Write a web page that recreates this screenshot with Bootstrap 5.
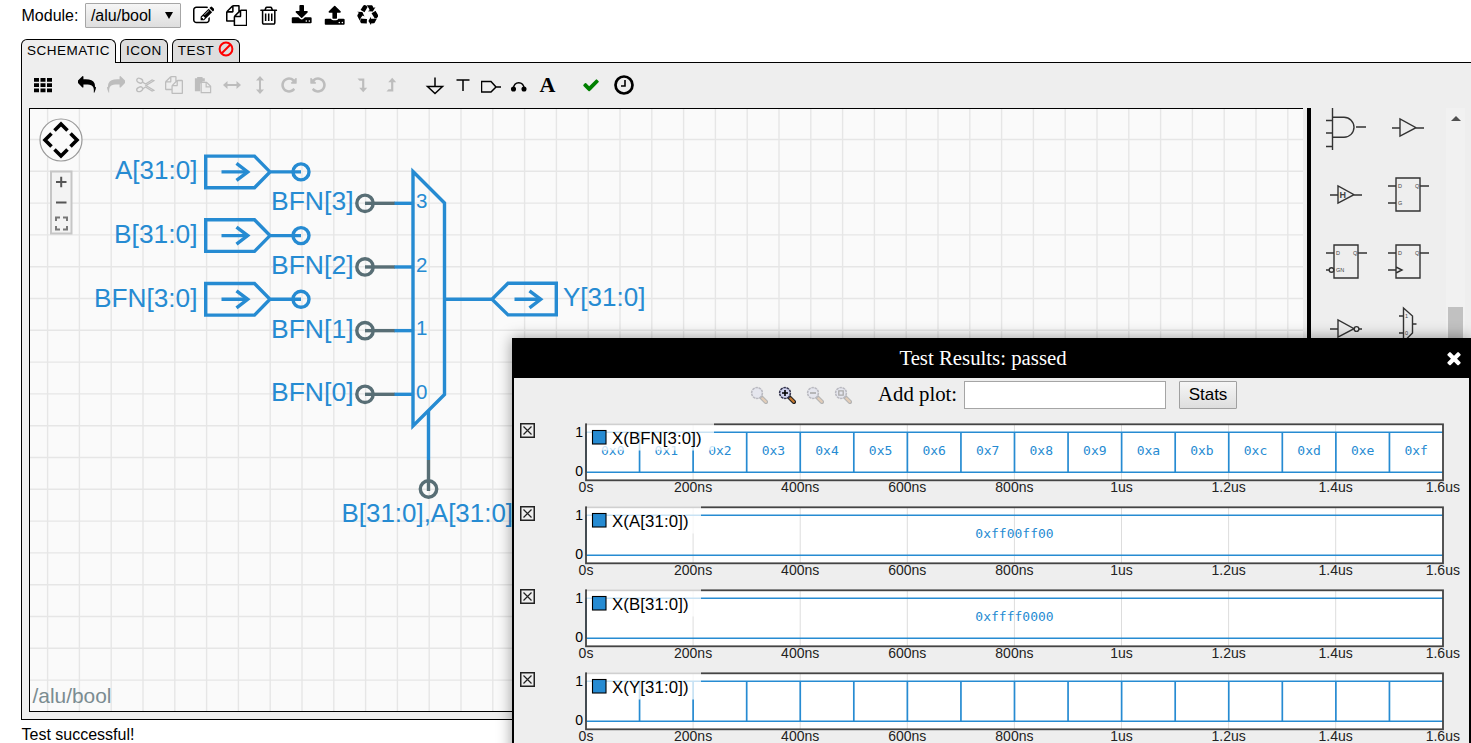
<!DOCTYPE html>
<html lang="en">
<head>
<meta charset="utf-8">
<title>/alu/bool</title>
<link href="https://cdn.jsdelivr.net/npm/bootstrap@5.3.0/dist/css/bootstrap.min.css" rel="stylesheet">
<style>
body{font-family:"Liberation Sans",Arial,sans-serif;font-size:16px;line-height:18px;color:#000;background:#fff;height:743px}
svg{fill:currentColor}
.app{height:743px}
.module-bar{height:31px;padding-left:21.500px}
.module-bar svg{width:21.4px;height:21.4px}
.module-icons{gap:11.4px;margin-left:12px}
.picker{width:96px;height:25px;margin-left:6.500px;border:1px solid #a6a6a6;border-radius:1px;background:linear-gradient(#f6f6f6,#dedede);padding:0 7px 0 5px}
.picker i{border:4px solid transparent;border-top:7px solid #000;border-bottom:0;width:0;height:0}
.tabs{height:31px;padding-left:21px;gap:4px;z-index:1}
.tab-item{height:23px;border:1px solid #000;border-bottom:0;border-radius:6px 6px 0 0;background:#ddd;font-size:13.5px;letter-spacing:.5px;padding:0 5px;line-height:21px}
.tab-item.current{height:24px;background:#eee;margin-bottom:-1px;width:95px}
.frame{margin-left:21px;height:658px;border:1px solid #000;border-right:0;background:#eee}
.tools{height:45px;padding-left:7px}
.tool{width:28.9px;height:43px}
.tool.t28{width:28.1px}
.tool svg{width:20px;height:20px}
.off{color:#bdbdbd}
.work{height:604px;padding-left:7px}
.sheet{width:1274px;height:604px;border:1px solid #000;border-right:0;background:#fafafa}
.divider{width:4px;background:#000;margin-left:4px}
.parts{width:135px;overflow:hidden;padding-left:3px}
.parts-grid{display:grid;grid-template-columns:62px 62px;grid-auto-rows:67px;margin-top:-14px}
.parts-grid svg{width:62px;height:67px;fill:none;stroke:#333;stroke-width:1.4;overflow:visible}
.parts-grid text{font:5.5px "Liberation Sans",sans-serif;fill:#444;stroke:none}
.sbar{width:19px;background:#f1f1f1}
.sbar .up{border:5px solid transparent;border-bottom:5px solid #505050;border-top:0;width:0;height:0;margin-top:8px}
.sbar .thumb{width:15px;height:60px;background:#c1c1c1;margin-top:186px}
.status{padding:6px 0 0 21.500px}
.results{left:512px;top:338px;width:959px;height:440px;border:2px solid #000;border-top:0;background:#eee;box-shadow:0 0 14px rgba(0,0,0,.4)}
.results-head{height:40px;background:#000;color:#fff;font:20.8px "Liberation Serif",serif}
.results-head svg{width:20px;height:20px;margin-right:5px}
.plot-tools{height:34px;padding-left:236px;font:20.8px "Liberation Serif",serif}
.add-label{width:79px;margin:-3px 0 0 26px;white-space:nowrap}
.mags{gap:10px}
.mags svg{width:18px;height:18px}
.faded{opacity:.28}
.plot-input{width:202px;height:28px;border:1px solid #a5a5a5;background:#fff;margin-left:7px}
.stats-btn{width:58px;height:28px;margin-left:13px;border:1px solid #a0a0a0;border-radius:1px;background:linear-gradient(#f6f6f6,#dedede);font:17px "Liberation Sans",sans-serif;padding:0;color:#000}
.plots{padding-top:6px}
.plot-row{height:83.1px}
.plot-row .x-btn{width:15px;height:15px;margin:5px 0 0 6px;flex:none;fill:none}
.wave{width:934px;height:83px;overflow:visible;flex:none}
.wave text,.schem text{font-family:"Liberation Sans",Arial,sans-serif}
.wave text.hex{font-family:"DejaVu Sans Mono",monospace;font-size:13px;fill:#268bd2}
</style>
</head>
<body class="overflow-hidden">
<svg width="0" height="0" class="position-absolute">
<symbol id="edit" viewBox="0 0 1792 1792"><path d="M888 1184l116-116-152-152-116 116v56h96v96h56zm440-720q-16-16-33 1l-350 350q-17 17-1 33t33-1l350-350q17-17 1-33zm80 594v190q0 119-84.500 203.500t-203.500 84.500h-832q-119 0-203.500-84.500t-84.500-203.500v-832q0-119 84.500-203.500t203.500-84.500h832q63 0 117 25 15 7 18 23 3 17-9 29l-49 49q-14 14-32 8-23-6-45-6h-832q-66 0-113 47t-47 113v832q0 66 47 113t113 47h832q66 0 113-47t47-113v-126q0-13 9-22l64-64q15-15 35-7t20 29zm-96-738l288 288-672 672h-288v-288zm444 132l-92 92-288-288 92-92q28-28 68-28t68 28l152 152q28 28 28 68t-28 68z"/></symbol>
<symbol id="files" viewBox="0 0 1792 1792"><path d="M1696 384q40 0 68 28t28 68v1216q0 40-28 68t-68 28h-960q-40 0-68-28t-28-68v-288h-544q-40 0-68-28t-28-68v-672q0-40 20-88t48-76l408-408q28-28 76-48t88-20h416q40 0 68 28t28 68v328q68-40 128-40h416zm-544 213l-299 299h299v-299zm-640-384l-299 299h299v-299zm196 647l316-316v-416h-384v416q0 40-28 68t-68 28h-416v640h512v-256q0-40 20-88t48-76zm956 804v-1152h-384v416q0 40-28 68t-68 28h-416v640h896z"/></symbol>
<symbol id="trash" viewBox="0 0 1792 1792"><path d="M704 736v576q0 14-9 23t-23 9h-64q-14 0-23-9t-9-23v-576q0-14 9-23t23-9h64q14 0 23 9t9 23zm256 0v576q0 14-9 23t-23 9h-64q-14 0-23-9t-9-23v-576q0-14 9-23t23-9h64q14 0 23 9t9 23zm256 0v576q0 14-9 23t-23 9h-64q-14 0-23-9t-9-23v-576q0-14 9-23t23-9h64q14 0 23 9t9 23zm128 724v-948h-896v948q0 22 7 40.500t14.500 27 10.500 8.500h832q3 0 10.500-8.500t14.500-27 7-40.500zm-672-1076h448l-48-117q-7-9-17-11h-317q-10 2-17 11zm928 32v64q0 14-9 23t-23 9h-96v948q0 83-47 143.500t-113 60.500h-832q-66 0-113-58.500t-47-141.500v-952h-96q-14 0-23-9t-9-23v-64q0-14 9-23t23-9h309l70-167q15-37 54-63t79-26h320q40 0 79 26t54 63l70 167h309q14 0 23 9t9 23z"/></symbol>
<symbol id="download" viewBox="0 0 1792 1792"><path d="M1344 1344q0-26-19-45t-45-19-45 19-19 45 19 45 45 19 45-19 19-45zm256 0q0-26-19-45t-45-19-45 19-19 45 19 45 45 19 45-19 19-45zm128-224v320q0 40-28 68t-68 28h-1472q-40 0-68-28t-28-68v-320q0-40 28-68t68-28h465l135 136q58 56 136 56t136-56l136-136h464q40 0 68 28t28 68zm-325-569q17 41-14 70l-448 448q-18 19-45 19t-45-19l-448-448q-31-29-14-70 17-39 59-39h256v-448q0-26 19-45t45-19h256q26 0 45 19t19 45v448h256q42 0 59 39z"/></symbol>
<symbol id="upload" viewBox="0 0 1792 1792"><path d="M1344 1472q0-26-19-45t-45-19-45 19-19 45 19 45 45 19 45-19 19-45zm256 0q0-26-19-45t-45-19-45 19-19 45 19 45 45 19 45-19 19-45zm128-224v320q0 40-28 68t-68 28h-1472q-40 0-68-28t-28-68v-320q0-40 28-68t68-28h427q21 56 70.500 92t110.500 36h256q61 0 110.500-36t70.500-92h427q40 0 68 28t28 68zm-325-648q-17 40-59 40h-256v448q0 26-19 45t-45 19h-256q-26 0-45-19t-19-45v-448h-256q-42 0-59-40-17-39 14-69l448-448q18-19 45-19t45 19l448 448q31 30 14 69z"/></symbol>
<symbol id="recycle" viewBox="0 0 1792 1792"><path d="M836 1169l-15 368-2 22-420-29q-36-3-67-31.500t-47-65.500q-11-27-14.500-55t4-65 12-55 21.500-64 19-53q78 12 509 28zm-387-586l180 379-147-92q-63 72-111.500 144.500t-72.500 125-39.500 94.500-18.500 63l-4 21-190-357q-17-26-18-56t6-47l8-18q35-63 114-188l-140-86zm1231 517l-188 359q-12 29-36.500 46.500t-43.500 20.500l-18 4q-71 7-219 12l8 164-230-367 211-362 7 173q170 16 283 5t170-33zm-785-924q-47 63-265 435l-317-187-19-12 225-356q20-31 60-45t80-10q24 2 48.500 12t42 21 41.500 33 36 34.500 36 39.500 32 35zm655 307l212 363q18 37 12.500 76t-27.500 74q-13 20-33 37t-38 28-48.500 22-47 16-51.500 14-46 12q-34-72-265-436l313-195zm-143-226l142-83-220 373-419-20 151-86q-34-89-75-166t-75.500-123.500-64.500-80-47-46.500l-17-13 405 1q31-3 58 10.500t39 28.500l11 15q39 61 112 190z"/></symbol>
<symbol id="ban" viewBox="0 0 16 16"><g fill="none" stroke="currentColor" stroke-width="2"><circle cx="8" cy="8" r="6.400"/><path d="M3.500 12.500l9-9"/></g></symbol>
<symbol id="th" viewBox="0 0 20 20"><path d="M1 3h5v3.800H1zM7.500 3h5v3.800h-5zM14 3h5v3.800h-5zM1 8.200h5V12H1zM7.500 8.200h5V12h-5zM14 8.200h5V12h-5zM1 13.400h5v3.800H1zM7.500 13.400h5v3.800h-5zM14 13.400h5v3.800h-5z"/></symbol>
<symbol id="reply" viewBox="0 0 1792 1792"><path d="M1792 1120q0 166-127 451-3 7-10.500 24t-13.500 30-13 22q-12 17-28 17-15 0-23.500-10t-8.500-25q0-9 2.500-26.500t2.500-23.500q5-68 5-123 0-112-19.500-200.500t-54-153.500-90-111.500-120-76-151-46.500-176-25.500-202.500-6.500h-224v256q0 26-19 45t-45 19-45-19l-512-512q-19-19-19-45t19-45l512-512q19-19 45-19t45 19 19 45v256h224q713 0 875 403 53 134 53 333z"/></symbol>
<symbol id="cut" viewBox="0 0 20 20"><g fill="none" stroke="currentColor" stroke-width="1.300"><ellipse cx="4.700" cy="5.700" rx="3.100" ry="2.200" transform="rotate(25 4.700 5.700)"/><ellipse cx="4.700" cy="14.300" rx="3.100" ry="2.200" transform="rotate(-25 4.700 14.300)"/><path d="M7.500 7l3 2 6.600-4 1.900.7-8 4.800 8 4.800-1.900.7-6.600-4-3 2"/></g></symbol>
<symbol id="paste" viewBox="0 0 20 20"><path d="M1 2.500h2.500V1h6v1.500H12V6H9.500L7 8.500V17H1z"/><path d="M8 7h6l4.500 4.500V18.500H8z" fill="#eee" stroke="currentColor" stroke-width="1.300"/><path d="M13.500 7v5h5" fill="none" stroke="currentColor" stroke-width="1.300"/></symbol>
<symbol id="harrow" viewBox="0 0 20 20"><path d="M1 10L5.500 6v3h9V6l4.500 4-4.500 4v-3h-9v3z"/></symbol>
<symbol id="repeat" viewBox="0 0 1792 1792"><path d="M1664 256v448q0 26-19 45t-45 19h-448q-42 0-59-40-17-39 14-69l138-138q-148-137-349-137-104 0-198.500 40.500t-163.500 109.500-109.500 163.500-40.500 198.500 40.500 198.500 109.500 163.500 163.500 109.500 198.500 40.500q119 0 225-52t179-147q7-10 23-12 15 0 25 9l137 138q9 8 9.500 20.500t-7.500 22.500q-109 132-264 204.500t-327 72.500q-156 0-298-61t-245-164-164-245-61-298 61-298 164-245 245-164 298-61q147 0 284.500 55.500t244.500 156.500l130-129q29-31 70-14 39 17 39 59z"/></symbol>
<symbol id="down" viewBox="0 0 20 20"><path d="M4.500 3.500h6.800v9.200h2.900l-4 4.500-4-4.500h2.900v-7H6.500z"/></symbol>
<symbol id="check" viewBox="0 0 1792 1792"><path d="M1671 566q0 40-28 68l-724 724-136 136q-28 28-68 28t-68-28l-136-136-362-362q-28-28-28-68t28-68l136-136q28-28 68-28t68 28l294 295 656-657q28-28 68-28t68 28l136 136q28 28 28 68z"/></symbol>
<symbol id="times" viewBox="0 0 1792 1792"><path d="M1490 1322q0 40-28 68l-136 136q-28 28-68 28t-68-28l-294-294-294 294q-28 28-68 28t-68-28l-136-136q-28-28-28-68t28-68l294-294-294-294q-28-28-28-68t28-68l136-136q28-28 68-28t68 28l294 294 294-294q28-28 68-28t68 28l136 136q28 28 28 68t-28 68l-294 294 294 294q28 28 28 68z"/></symbol>
<symbol id="mag" viewBox="0 0 18 18"><path d="M11 11l5 5" stroke="#222" stroke-width="4.200" stroke-linecap="round"/><path d="M12.300 12.300l3.500 3.500" stroke="#c87a30" stroke-width="2.200" stroke-linecap="round"/><circle cx="7" cy="7" r="5.400" fill="#cfd2ee" stroke="#33334d" stroke-width="1.500" stroke-dasharray="2.600 .7"/></symbol>
<symbol id="pin" viewBox="0 0 110 40" overflow="visible"><g fill="none" stroke="#268bd2" stroke-width="3.400"><path d="M5.700 4.200h48.800L70 20 54.500 35.800H5.700zM70 20h31M21.500 20h26"/><path d="M36.500 11.500L47.700 20l-11.200 8.500"/><circle cx="101" cy="20" r="8"/></g></symbol>
</svg>

<div class="app d-flex flex-column position-relative overflow-hidden">
<header class="module-bar d-flex align-items-center flex-shrink-0">
<span>Module:</span>
<div class="picker d-flex align-items-center justify-content-between"><span>/alu/bool</span><i></i></div>
<div class="module-icons d-flex">
<svg><use href="#edit"/></svg><svg><use href="#files"/></svg><svg><use href="#trash"/></svg><svg><use href="#download"/></svg><svg><use href="#upload"/></svg><svg><use href="#recycle"/></svg>
</div>
</header>
<nav class="tabs d-flex align-items-end position-relative flex-shrink-0">
<div class="tab-item current">SCHEMATIC</div><div class="tab-item">ICON</div>
<div class="tab-item d-flex">TEST<svg width="16" height="16" style="color:#f00;margin:1px 0 0 4px"><use href="#ban"/></svg></div>
</nav>
<main class="frame flex-shrink-0">
<div class="tools d-flex align-items-start" id="tools"></div>
<div class="work d-flex">
<div class="sheet"><svg class="schem d-block" id="schem" width="1273" height="602" viewBox="30 109 1273 602"></svg></div>
<div class="divider"></div>
<div class="parts"><div class="parts-grid">
<svg viewBox="1314 94 62 67"><path d="M1332.500 94v56M1326 120.500h6.500M1326 133h6.500M1326 146.500h6.500M1332.500 117.300h11.500a9.800 9.800 0 0 1 0 20h-11.500M1356 127h10"/></svg>
<svg viewBox="1376 94 62 67"><path d="M1392 128h8M1416 128h8M1400 119v17l16-8.300z"/></svg>
<svg viewBox="1314 161 62 67"><path d="M1330 195h8M1354 195h8M1338 186v17l16-8.300z"/><text x="1339.500" y="198" style="font-weight:bold;font-size:9px">H</text></svg>
<svg viewBox="1376 161 62 67"><path d="M1396 178h24v33h-24zM1388 186h8M1388 203h8M1420 186h9"/><text x="1398" y="188">D</text><text x="1415" y="188">Q</text><text x="1398" y="205">G</text></svg>
<svg viewBox="1314 228 62 67"><path d="M1334 245h24v33h-24zM1326 253h8M1326 270h4M1358 253h9"/><circle cx="1331.500" cy="270" r="2.300"/><text x="1336" y="255">D</text><text x="1353" y="255">Q</text><text x="1336" y="272">GN</text></svg>
<svg viewBox="1376 228 62 67"><path d="M1396 245h24v33h-24zM1388 253h8M1388 270h8M1420 253h9M1396 267l6 3-6 3"/><text x="1398" y="255">D</text><text x="1415" y="255">Q</text></svg>
<svg viewBox="1314 295 62 67"><path d="M1330 329h8M1359 329h3M1338 320v17l16-8.300z"/><circle cx="1356.500" cy="329" r="2.400"/></svg>
<svg viewBox="1376 295 62 67"><path d="M1403.500 308v34l9-9v-17zM1399 316h4.500M1399 333h4.500M1412.500 324h4"/><text x="1405" y="318">1</text><text x="1405" y="335">0</text></svg>
</div></div>
<div class="sbar d-flex flex-column align-items-center"><div class="up"></div><div class="thumb"></div></div>
</div>
</main>
<footer class="status flex-shrink-0">Test successful!</footer>

<section class="results position-absolute">
<div class="results-head d-flex align-items-center"><span class="flex-grow-1 text-center ps-2">Test Results: passed</span><svg><use href="#times"/></svg></div>
<div class="plot-tools d-flex align-items-center">
<div class="mags d-flex">
<svg class="faded"><use href="#mag"/></svg>
<svg><use href="#mag"/><path d="M4 7h6M7 4v6" stroke="#000" stroke-width="1.600"/></svg>
<svg class="faded"><use href="#mag"/><path d="M4 7h6" stroke="#000" stroke-width="1.600"/></svg>
<svg class="faded"><use href="#mag"/><path d="M4.800 4.800h4.400v4.400H4.800z" fill="none" stroke="#000" stroke-width="1.300"/></svg>
</div>
<span class="add-label">Add plot:</span><div class="plot-input"></div><button class="stats-btn">Stats</button>
</div>
<div class="plots" id="plots"></div>
</section>
</div>

<script>
// toolbar: [drawing, extra classes]
const use = (id, t = '') => `<svg><use href="#${id}" ${t}/></svg>`;
const flip = 'transform="matrix(-1 0 0 1 20 0)"';
const line = d => `<svg fill="none" style="fill:none" stroke="#000" stroke-width="1.5">${d}</svg>`;
const gap = w => `<div style="width:${w}px"></div>`;
const tool = (s, c = '') => `<div class="tool d-flex align-items-center justify-content-center ${c}">${s}</div>`;
const small = s => s.replace('<svg>', '<svg style="width:18px;height:18px" viewBox="0 0 20 20">');
document.getElementById('tools').innerHTML =
 tool(use('th')) + gap(14.8) + tool(small(use('reply'))) +
 [small(use('reply', flip)), use('cut'), small(use('files')), small(use('paste')), use('harrow'), use('harrow', 'transform="rotate(90 10 10)"'), small(use('repeat')), small(use('repeat', flip))].map(s => tool(s, 'off')).join('') +
 gap(15.5) + tool(use('down'), 'off') + tool(use('down', 'transform="matrix(1 0 0 -1 0 20)"'), 'off') + gap(15) +
 [line('<path d="M10 2.500v9M2.500 11.500h15L10 18.500z"/>'),
  line('<path d="M3.500 5h13M10 5v11"/>'),
  line('<path d="M0.500 6.500h9.500l5 5.500-5 5H.5zM15 12h5"/>'),
  line('<path d="M4.500 14C4 5.500 15.500 5.500 15 14"/><circle cx="4.500" cy="14" r="1.800" fill="#000"/><circle cx="15" cy="14" r="1.800" fill="#000"/>'),
  '<span style="font:bold 22px Liberation Serif,serif">A</span>'].map(s => tool(s, 't28')).join('') +
 gap(15.600) + tool(`<span style="color:#008000" class="d-flex">${small(use('check'))}</span>`, 't28') + gap(4.500) +
 tool(`<svg style="fill:none" stroke="#000"><circle cx="10" cy="10" r="8.500" stroke-width="2.700"/><path d="M11 5v6H7" stroke-width="1.600"/></svg>`, 't28');

// schematic sheet
let s = '', B = '#268bd2', G = '#586e75';
for (let k = 0; k < 40; k++) s += `<path d="M${47.6 + 31.8 * k} 109v602" stroke="#e6e6e6" stroke-width="1.4"/>`;
for (let k = 0; k < 18; k++) s += `<path d="M30 ${139.5 + 31.8 * k}h1273" stroke="#e6e6e6" stroke-width="1.4"/>`;
const txt = (x, y, t, w, z = 25.5, c = B) => `<text x="${x}" y="${y}" ${w ? `textLength="${w}" lengthAdjust="spacingAndGlyphs"` : ''} font-size="${z}" fill="${c}">${t}</text>`;
['A[31:0]', 'B[31:0]', 'BFN[3:0]'].forEach((t, i) => {
  const y = 171.9 + 63.7 * i;
  s += `<use href="#pin" x="200" y="${y - 20}" width="110" height="40"/>` + (i < 2 ? txt(i ? 114 : 115, y + 7.300, t, i ? 83.500 : 82.500) : txt(94, y + 7.300, t, 103.500));
});
s += `<g fill="none" stroke="${B}" stroke-width="3.4"><path d="M413 171.500L444.500 203v191.500L413 426z"/><path d="M428.500 411v49M444.500 299.300h47.500M492 299.300l16-16h48.300v31.600H508zM514.500 299.300H540"/><path d="M529.500 290.800L540.700 299.300l-11.200 8.500"/></g>`;
[3, 2, 1, 0].forEach((n, i) => {
  const y = 203.3 + 63.67 * i;
  s += `<g fill="none" stroke-width="3.4" stroke="${G}"><circle cx="365" cy="${y}" r="8.2"/><path d="M365 ${y}h30"/><path d="M394.500 ${y}H413" stroke="${B}"/></g>` + txt(271, y + 7, `BFN[${n}]`, 82.500) + txt(416, y + 4.600, n, 0, 20.5);
});
s += `<g fill="none" stroke="${G}" stroke-width="3.4"><circle cx="428.500" cy="489" r="8.2"/><path d="M428.500 460v31"/></g>` + txt(341.500, 522.4, 'B[31:0],A[31:0]', 171.500) + txt(563, 306, 'Y[31:0]', 82.500) + txt(32.5, 703, '/alu/bool', 79, 20.8, '#7b8c91');
s += `<circle cx="61" cy="140" r="21" fill="#fafafa" stroke="#999" stroke-width="1.2"/><g fill="none" stroke="#000" stroke-width="3.6"><path d="M54.500 130.500l6.500-6.500 6.500 6.500M54.500 149.500l6.500 6.500 6.500-6.500M51.500 133.500l-6.500 6.500 6.500 6.500M70.500 133.500l6.500 6.500-6.500 6.500"/></g>
<rect x="51" y="171.500" width="20.5" height="62" fill="#f3f3f3" stroke="#c6c6c6" stroke-width="2"/><path d="M56 182h10.500M61.200 176.800v10.400M56 202.500h10.500" stroke="#555" stroke-width="2"/><path d="M56 221v-3.500h4M63 217.500h4v3.500M67 226v3.500h-4M60 229.500h-4v-3.500" fill="none" stroke="#777" stroke-width="2"/>`;
document.getElementById('schem').innerHTML = s;

// result plots; x runs from 586 (0s) to 1443 (1.6us)
const traces = [
  { n: 'X(BFN[3:0])', lw: 128, tw: 89.5, cells: [...'0123456789abcdef'].map(c => '0x' + c) },
  { n: 'X(A[31:0])', lw: 115, tw: 76.5, cells: ['0xff00ff00'] },
  { n: 'X(B[31:0])', lw: 115, tw: 76.5, cells: ['0xffff0000'] },
  { n: 'X(Y[31:0])', lw: 115, tw: 76.5, cells: Array(16).fill('') }];
const ticks = ['0s', '200ns', '400ns', '600ns', '800ns', '1us', '1.2us', '1.4us', '1.6us'];
document.getElementById('plots').innerHTML = traces.map(t => {
  let g = '<rect x="586" y="6.500" width="857" height="56" fill="#fff"/>', w = 857 / t.cells.length;
  ticks.forEach((_, i) => g += `<path d="M${586 + i * 107.1} 7v55" stroke="#ddd"/>`);
  g += '<path d="M586 14.300h857M586 54.300h857" stroke="#268bd2" stroke-width="1.5"/>';
  t.cells.forEach((c, i) => g += `<path d="M${586 + i * w} 14.300v40" stroke="#268bd2" stroke-width="1.7"/>` + (c && `<text class="hex" text-anchor="middle" x="${586 + (i + .5) * w}" y="36.800">${c}</text>`));
  g += '<rect x="586" y="6.300" width="857" height="56" fill="none" stroke="#444" stroke-width="1.8"/>';
  g += `<rect x="587" y="5" width="${t.lw - 1}" height="27.500" fill="#fff" opacity=".75"/><rect x="592.500" y="12.500" width="13.500" height="13.500" fill="#268bd2" stroke="#000" stroke-width="1.1"/><text x="612" y="25.800" font-size="16.8" textLength="${t.tw}">${t.n}</text>`;
  g += '<text x="583" y="18.500" text-anchor="end" font-size="14">1</text><text x="583" y="58" text-anchor="end" font-size="14">0</text>';
  ticks.forEach((l, i) => g += `<text x="${586 + i * 107.1}" y="74" text-anchor="middle" font-size="14" fill="#222">${l}</text>`);
  return `<div class="plot-row d-flex"><svg class="x-btn" stroke="#222"><rect x=".75" y=".75" width="13.500" height="13.500" stroke-width="1.500"/><path d="M3.500 3.500l8 8M11.500 3.500l-8 8" stroke-width="1.200"/></svg><svg class="wave" viewBox="535 0 934 83">${g}</svg></div>`;
}).join('');
</script>
</body>
</html>
